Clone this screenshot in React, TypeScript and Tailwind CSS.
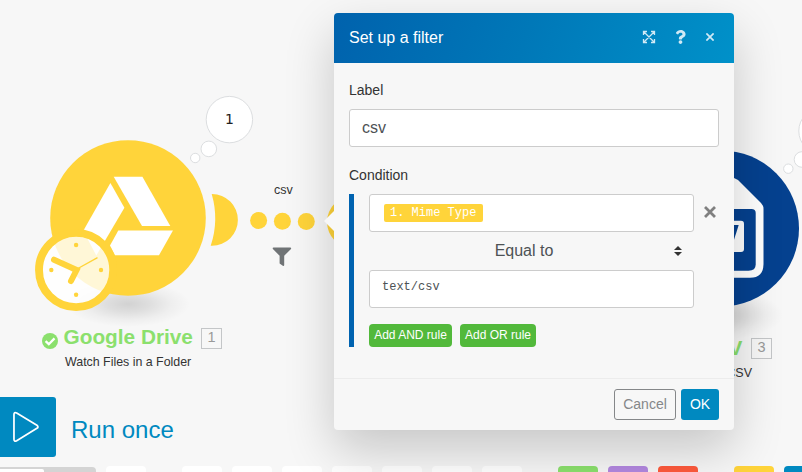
import React from "react";
import { FaQuestion } from "react-icons/fa";

function Canvas() {
  return (
    <svg className="absolute inset-0" width="802" height="472" viewBox="0 0 802 472">
      <defs>
        <radialGradient id="floor">
          <stop offset="0" stopColor="#000" stopOpacity="0.15" />
          <stop offset="0.35" stopColor="#000" stopOpacity="0.1" />
          <stop offset="0.7" stopColor="#000" stopOpacity="0.035" />
          <stop offset="1" stopColor="#000" stopOpacity="0" />
        </radialGradient>
      </defs>
      <ellipse cx="128" cy="304" rx="62" ry="23" fill="url(#floor)" />
      <ellipse cx="721" cy="315" rx="62" ry="25" fill="url(#floor)" />

      {/* Google Drive module */}
      <path d="M211.7 194H212A25.9 25.9 0 0 1 212 245.8H210.7A87 87 0 0 0 211.7 194Z" fill="#ffd43a" />
      <circle cx="128" cy="218" r="77.8" fill="#ffd43a" />
      <g fill="#fff">
        <path d="M113.7 176.7H142.4L170.3 226H142Z" />
        <path d="M110.4 183L124.4 207.7L96.3 255.5L83.3 230.8Z" />
        <path d="M118.3 230.5H173L159 255.2H115L110 245.5Z" />
      </g>

      {/* Schedule clock */}
      <circle cx="76.1" cy="270" r="34" fill="#fff" fillOpacity="0.8" />
      <circle cx="76.1" cy="270" r="37.1" fill="none" stroke="#ffd43a" strokeWidth="7.9" />
      <g fill="#ffd43a">
        <circle cx="76.1" cy="245" r="2.2" />
        <circle cx="76.1" cy="294.8" r="2.2" />
        <circle cx="51.3" cy="270" r="2.2" />
        <circle cx="101" cy="270" r="2.2" />
      </g>
      <path d="M54 259.7L76.6 270L71 281" fill="none" stroke="#ffd43a" strokeWidth="6" strokeLinecap="round" />
      <path d="M77 269L97.5 257.7" stroke="#ffd43a" strokeWidth="1.4" />

      {/* Bundle count bubbles */}
      <g fill="#fff" stroke="#dcdee0">
        <circle cx="229.4" cy="119.6" r="23.2" />
        <circle cx="208.8" cy="148.9" r="7.8" />
        <circle cx="195.2" cy="158" r="4.7" />
        <circle cx="822" cy="131" r="23.2" />
        <circle cx="802" cy="159.5" r="7.8" />
        <circle cx="788.3" cy="168.7" r="4.7" />
      </g>

      {/* Route between modules */}
      <g fill="#ffd43a">
        <circle cx="258.6" cy="220.6" r="8.5" />
        <circle cx="282.4" cy="221.2" r="8.5" />
        <circle cx="306.3" cy="221.6" r="8.5" />
        <circle cx="353" cy="222" r="26" />
      </g>
      <path
        d="M273.5 247.6H290.2Q291.6 247.6 291 249L284.2 255.8V265.3Q283.8 266.4 282.8 265.8L279.6 263.6V255.8L272.9 249Q272.2 247.6 273.5 247.6Z"
        fill="#707476"
      />

      {/* CSV module */}
      <circle cx="721" cy="228.4" r="78" fill="#05418f" />
      <path d="M700 178H734L738 180L761 203Q763.5 205.5 763.5 209V264Q763.5 277.8 750 277.8H700Z" fill="#fff" />
      <path d="M700 209H751.5Q755.7 209 755.7 213V264.5Q755.7 270.7 748.5 270.7H700Z" fill="#05418f" />
      <path d="M700 220.8H741Q744 220.8 744 224V249Q744 252 741 252H700Z" fill="#fff" />
      <path d="M727 225H738.7L733 243H727Z" fill="#05418f" />

      <circle cx="50" cy="341" r="8" fill="#8be06d" />
      <path d="M45.6 341.2L48.8 344.2L54.5 338.4" fill="none" stroke="#fff" strokeWidth="2.3" />
    </svg>
  );
}

const label = "absolute whitespace-nowrap leading-none";

function Labels() {
  return (
    <>
      <span className={`${label} left-[225px] top-[112px] font-['DejaVu_Sans',sans-serif] text-[14px] text-[#222]`}>1</span>
      <span className={`${label} left-[274px] top-[184px] text-[12.5px] text-[#333]`}>csv</span>
      <span className={`${label} left-[63.5px] top-[327px] text-[20.8px] font-bold text-[#8be06d]`}>Google Drive</span>
      <span className="absolute left-[201px] top-[328px] flex h-[21px] w-[21px] items-center justify-center border border-[#c4c6c8] pb-[2px] text-[14.5px] leading-none text-[#999]">1</span>
      <span className={`${label} left-[65px] top-[356px] text-[12.4px] text-[#333]`}>Watch Files in a Folder</span>
      <span className={`${label} right-[59.5px] top-[338px] text-[20.8px] font-bold text-[#8be06d]`}>CSV</span>
      <span className="absolute left-[751px] top-[338px] flex h-[21px] w-[21px] items-center justify-center border border-[#c4c6c8] pb-[2px] text-[14.5px] leading-none text-[#999]">3</span>
      <span className={`${label} right-[50px] top-[367px] text-[12.5px] text-[#333]`}>Parse CSV</span>
    </>
  );
}

function Toolbar() {
  const tile = "h-[40px] w-[40px] shrink-0 rounded-[4px]";
  return (
    <div className="mt-[9px] flex h-[40px] gap-[10px]">
      <div className="mt-px w-[96px] shrink-0 rounded-tr-[4px] bg-[#d4d4d4] pt-[2px]">
        <div className="h-full w-[44px] rounded-tr-[2px] bg-white" />
      </div>
      <div className={`${tile} mr-[26px] bg-white`} />
      <div className={`${tile} bg-white`} />
      <div className={`${tile} bg-white`} />
      <div className={`${tile} bg-white`} />
      <div className={`${tile} bg-white`} />
      <div className={`${tile} bg-white`} />
      <div className={`${tile} bg-white`} />
      <div className={`${tile} mr-[26px] bg-white`} />
      <div className={`${tile} bg-[#8be06d]`} />
      <div className={`${tile} bg-[#b388e0]`} />
      <div className={`${tile} mr-[26px] bg-[#ff5a3c]`} />
      <div className={`${tile} bg-[#ffd43a]`} />
      <div className={`${tile} bg-[#0089c0]`} />
    </div>
  );
}

function ExpandIcon() {
  return (
    <svg className="mb-[2px]" width="14" height="14" viewBox="0 0 14 14" fill="none" stroke="#d0e9f5" strokeWidth="1.3">
      <path d="M1.5 5V1.5H5M9 1.5H12.5V5M12.5 9V12.5H9M5 12.5H1.5V9M1.5 1.5L12.5 12.5M12.5 1.5L1.5 12.5" />
    </svg>
  );
}

function FilterDialog() {
  return (
    <div className="absolute left-[334px] top-[13px] flex h-[417px] w-[400px] flex-col rounded-[4px] bg-[#f7f7f7] shadow-[0_20px_50px_rgba(0,0,0,0.2)]">
      <svg className="absolute -left-[10px] top-[198px]" width="10" height="20" viewBox="0 0 10 20">
        <path d="M10 0L0 10L10 20Z" fill="#f7f7f7" />
      </svg>
      <header className="flex h-[50px] shrink-0 items-center rounded-t-[4px] bg-[linear-gradient(110deg,#0062ad_0%,#0078b8_48%,#0091c9_100%)] pl-[15px] pr-[20px]">
        <h1 className="flex-1 text-[16px] leading-none text-white">Set up a filter</h1>
        <ExpandIcon />
        <FaQuestion className="mb-[2px] ml-[18px] h-[14px] w-[13px] text-[#d0e9f5]" />
        <svg className="mb-[2px] ml-[19px]" width="8" height="8" viewBox="0 0 8 8" stroke="#d0e9f5" strokeWidth="1.7">
          <path d="M0.4 0.4L7.6 7.6M7.6 0.4L0.4 7.6" />
        </svg>
      </header>

      <div className="flex flex-1 flex-col px-[15px] pt-[19px] text-[14px] text-[#333]">
        <label className="leading-[16px]">Label</label>
        <div className="mt-[11px] flex h-[38px] shrink-0 items-center rounded-[3px] border border-[#ccc] bg-white px-[12px] text-[16px] text-[#4d5255]">csv</div>
        <label className="mt-[20px] leading-[16px]">Condition</label>
        <div className="mt-[11px] flex h-[153px] border-l-[5px] border-[#0063b0] pl-[15px]">
          <div className="flex w-[325px] flex-col">
            <div className="flex h-[38px] items-center rounded-[3px] border border-[#ccc] bg-white pl-[14px]">
              <span className="flex h-[18px] w-[99px] items-center rounded-[2px] bg-[#ffd43a] px-[6px] font-['Liberation_Mono',monospace] text-[12px] leading-none text-white">1. Mime Type</span>
            </div>
            <div className="relative flex h-[38px] items-center justify-center pr-[15px] text-[16px] text-[#4d5255]">
              Equal to
              <svg className="absolute right-[12px] top-[14px]" width="8" height="10" viewBox="0 0 8 10" fill="#333">
                <path d="M4 0L8 4H0ZM4 10L0 6H8Z" />
              </svg>
            </div>
            <div className="h-[38px] rounded-[3px] border border-[#ccc] bg-white px-[12px] pt-[9px] font-['Liberation_Mono',monospace] text-[12px] leading-[14px] text-[#4d5255]">text/csv</div>
            <div className="mt-[16px] flex gap-[8px] text-[12px] text-white">
              <button className="h-[23px] w-[83px] rounded-[4px] bg-[#52b93b] pb-[2px]">Add AND rule</button>
              <button className="h-[23px] w-[76px] rounded-[4px] bg-[#52b93b] pb-[2px]">Add OR rule</button>
            </div>
          </div>
          <svg className="ml-[10px] mt-[12px]" width="12" height="12" viewBox="0 0 12 12" stroke="#808080" strokeWidth="2.8">
            <path d="M1 1L11 11M11 1L1 11" />
          </svg>
        </div>
      </div>

      <footer className="flex h-[52px] shrink-0 justify-end gap-[5px] border-t border-[#ececec] px-[15px] pt-[10px] text-[14px]">
        <button className="h-[31px] w-[62px] rounded-[3px] border border-[#858789] text-[#858789]">Cancel</button>
        <button className="h-[31px] w-[38px] rounded-[3px] bg-[#0089c0] text-white">OK</button>
      </footer>
    </div>
  );
}

export default function App() {
  return (
    <div className="relative flex h-[472px] w-[802px] flex-col overflow-hidden bg-[#f7f7f7] pt-[397px] font-['Liberation_Sans',Arial,sans-serif]">
      <Canvas />
      <Labels />
      <div className="flex h-[60px] shrink-0 items-center">
        <button className="flex h-[60px] w-[56px] items-center rounded-r-[3px] bg-[#0089c0] pl-[13px]">
          <svg width="27" height="32" viewBox="0 0 28 32" fill="none" stroke="#fff" strokeWidth="1.8" strokeLinejoin="round">
            <path d="M1 3.2Q1 0 3.8 1.6L24.8 14.2Q27 16 24.8 17.4L3.8 30.2Q1 31.6 1 28.8Z" />
          </svg>
        </button>
        <span className="ml-[15px] mt-[6px] text-[24px] leading-none text-[#0089c0]">Run once</span>
      </div>
      <Toolbar />
      <FilterDialog />
    </div>
  );
}
